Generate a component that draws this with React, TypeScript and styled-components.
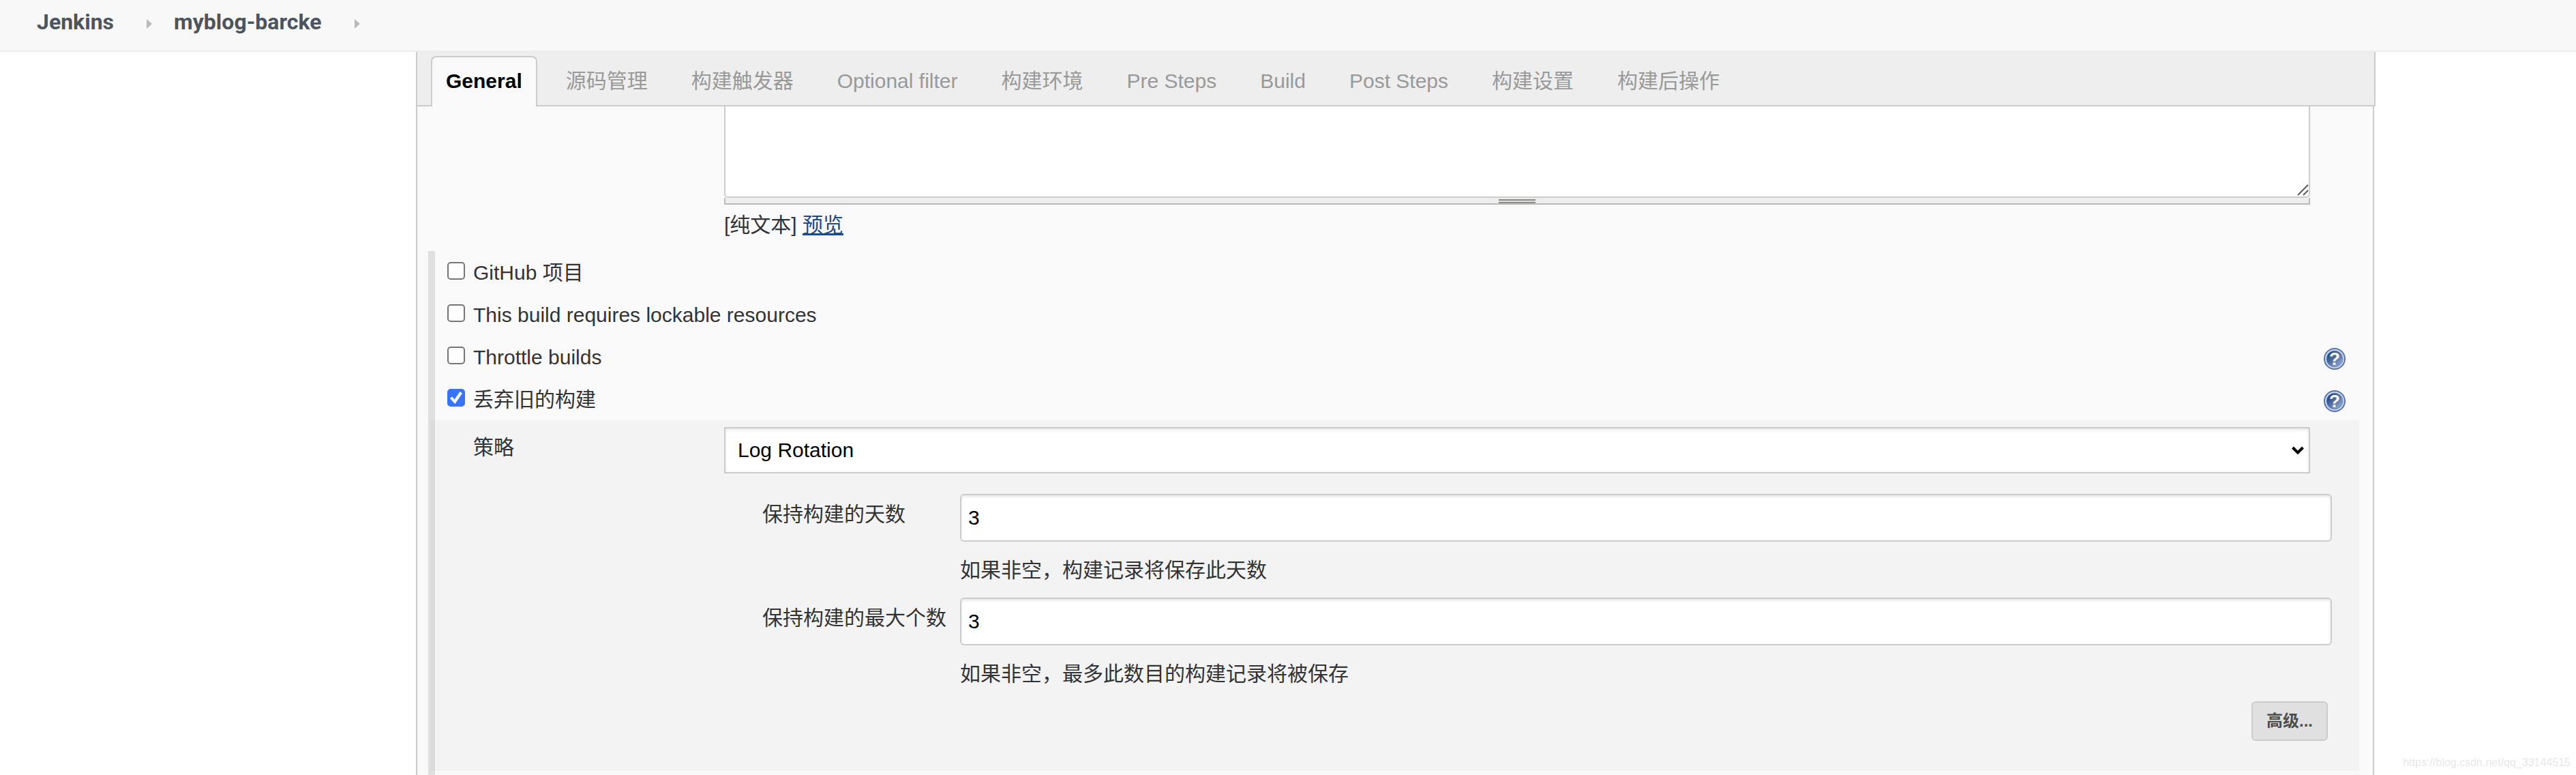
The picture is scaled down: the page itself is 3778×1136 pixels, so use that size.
import React, { useId } from "react";
import styled, { createGlobalStyle } from "styled-components";

const sans = `"Liberation Sans", "Noto Sans CJK SC", sans-serif`;

const GlobalStyle = createGlobalStyle`
  *, *::before, *::after { box-sizing: border-box; }
  body {
    margin: 0;
    background: #fff;
    color: #333;
    font-family: ${sans};
    font-size: 30px;
    line-height: 36px;
  }
`;

const Page = styled.div`
  display: flex;
  flex-direction: column;
  min-height: 100vh;
`;

const Breadcrumbs = styled.nav`
  display: flex;
  align-items: center;
  height: 76px;
  padding: 0 54px 10px;
  background: #f8f8f8;
  border-bottom: 2px solid #ecedf1;
`;

const Crumb = styled.a`
  color: #4d545d;
  font-family: Roboto, sans-serif;
  font-size: 32px;
  font-weight: bold;
  line-height: 36px;
  text-decoration: none;
`;

const CrumbArrow = styled.svg`
  width: 8px;
  height: 14px;
  margin: 6px 32px 0 48px;
  fill: #bababa;
`;

const Main = styled.main`
  flex: 1;
  display: flex;
  flex-direction: column;
  margin: 0 294px 0 610px;
`;

const TabBar = styled.div`
  display: flex;
  align-items: flex-end;
  gap: 20px;
  height: 80px;
  padding: 0 20px;
  background: #eee;
  border: solid #ccc;
  border-width: 0 2px 2px;
`;

const Tab = styled.button<{ $active?: boolean }>`
  height: 74px;
  margin-bottom: -2px;
  padding: 0 20px 2px;
  border: 2px solid ${(p) => (p.$active ? "#ccc" : "transparent")};
  border-bottom: 0;
  border-radius: 8px 8px 0 0;
  background: ${(p) => (p.$active ? "#f9f9f9" : "transparent")};
  color: ${(p) => (p.$active ? "#000" : "#999")};
  font: ${(p) => (p.$active ? "bold" : "normal")} 30px/36px ${sans};
  white-space: nowrap;
`;

const Panel = styled.form`
  flex: 1;
  display: flex;
  flex-direction: column;
  margin-right: 2px;
  background: #f9f9f9;
  border: solid #ccc;
  border-width: 0 2px;
`;

const Description = styled.div`
  padding: 0 92px 20px 450px;
`;

const TextAreaWrap = styled.div`
  position: relative;
  display: flex;
`;

const TextArea = styled.textarea`
  flex: 1;
  height: 134px;
  padding: 8px 10px;
  border: 2px solid #ccc;
  border-top: 0;
  border-radius: 0 0 6px 6px;
  background: #fff;
  font: 30px/36px ${sans};
  resize: none;
  outline: none;
`;

const Grip = styled.svg`
  position: absolute;
  right: 2px;
  bottom: 3px;
  width: 17px;
  height: 17px;
  stroke: #5a5a5a;
  stroke-width: 2;
`;

const ResizeBar = styled.div`
  display: flex;
  justify-content: center;
  height: 10px;
  padding-top: 2px;
  background: #eee;
  border: solid #bbbbb5;
  border-width: 0 2px 2px;
`;

const ResizeHandle = styled.div`
  width: 54px;
  height: 6px;
  background: #ddd;
  border: solid #8c8c88;
  border-width: 2px 0;
`;

const Markup = styled.p`
  margin: 12px 0 0;
`;

const PreviewLink = styled.a`
  color: #204a87;
`;

const Section = styled.section`
  flex: 1;
  margin: 0 20px 0 16px;
  border-left: 10px solid #e0e0e0;
`;

const OptionRow = styled.div`
  display: flex;
  align-items: flex-start;
  height: 62px;
  padding: 14px 20px 0 18px;
`;

const OptionLabel = styled.label`
  flex: 1;
  margin-left: 12px;
`;

const CheckBox = styled.input`
  appearance: none;
  width: 26px;
  height: 26px;
  margin: 2px 0 0;
  background: #fff;
  border: 2px solid #767676;
  border-radius: 5px;

  &:checked {
    background: #3875f6;
    border-color: #3875f6;
  }

  &:checked::before {
    content: "";
    display: block;
    width: 22px;
    height: 22px;
    background: #fff;
    clip-path: polygon(9% 55%, 23% 43%, 39% 61%, 75% 9%, 91% 20%, 42% 91%);
  }
`;

const HelpButton = styled.button`
  display: flex;
  margin-top: 4px;
  padding: 0;
  border: 0;
  background: none;
`;

const HelpSvg = styled.svg`
  width: 32px;
  height: 32px;
`;

const HelpMark = styled.text`
  font: bold 26px ${sans};
  fill: #fff;
  text-anchor: middle;
`;

const Details = styled.div`
  margin-left: -6px;
  padding: 10px 40px 44px 62px;
  background: rgba(0, 0, 0, 0.024);
`;

const StrategyRow = styled.div`
  display: grid;
  grid-template-columns: 368px 1fr;
  padding-right: 32px;
`;

const FieldLabel = styled.label`
  padding-top: 12px;
  white-space: nowrap;
`;

const SelectWrap = styled.div`
  position: relative;
  display: flex;
`;

const Select = styled.select`
  appearance: none;
  flex: 1;
  height: 68px;
  padding: 0 18px;
  border: 2px solid #ccc;
  border-radius: 0;
  background: #fff;
  box-shadow: inset 0 2px 4px rgba(0, 0, 0, 0.1);
  color: #000;
  font: 30px/36px ${sans};
`;

const SelectArrow = styled.svg`
  position: absolute;
  right: 9px;
  top: 28px;
  width: 18px;
  height: 13px;
  fill: none;
  stroke: #000;
  stroke-width: 4;
  pointer-events: none;
`;

const Fields = styled.div`
  padding: 30px 0 0 424px;
`;

const Field = styled.div`
  display: grid;
  grid-template-columns: 290px 1fr;
  padding-bottom: 22px;
`;

const TextInput = styled.input`
  width: 100%;
  height: 70px;
  padding: 0 10px;
  border: 2px solid #ccc;
  border-radius: 6px;
  background: #fff;
  box-shadow: inset 0 2px 4px rgba(0, 0, 0, 0.1);
  color: #000;
  font: 30px/36px ${sans};
`;

const Hint = styled.p`
  grid-column: 2;
  margin: 24px 0 0;
`;

const Actions = styled.div`
  display: flex;
  justify-content: flex-end;
  padding-right: 6px;
`;

const AdvancedButton = styled.button`
  height: 58px;
  padding: 0 20px;
  border: 2px solid #ccc;
  border-radius: 6px;
  background: #e0e0e0;
  color: #4d4d4d;
  font: bold 24px/28px ${sans};
`;

const Watermark = styled.div`
  position: fixed;
  right: 8px;
  bottom: 8px;
  color: #e6e6e6;
  font-size: 16px;
  line-height: 20px;
`;

function CrumbSeparator() {
  return (
    <CrumbArrow viewBox="0 0 8 14" aria-hidden="true">
      <path d="M0 0 8 7 0 14Z" />
    </CrumbArrow>
  );
}

function HelpIcon() {
  const id = useId();
  return (
    <HelpSvg viewBox="0 0 32 32" aria-hidden="true">
      <defs>
        <linearGradient id={id} x1="0" y1="0" x2="1" y2="1">
          <stop offset="0.2" stopColor="#2c4a86" />
          <stop offset="0.9" stopColor="#8fa9d0" />
        </linearGradient>
      </defs>
      <circle cx="16" cy="16" r="15" fill="#d3dcec" stroke="#5674ab" strokeWidth="2" />
      <circle cx="16" cy="16" r="12" fill={`url(#${id})`} stroke="#7b94c0" strokeWidth="1" />
      <HelpMark x="16" y="25">?</HelpMark>
    </HelpSvg>
  );
}

function Option({ label, checked, help }: { label: string; checked?: boolean; help?: boolean }) {
  const id = useId();
  return (
    <OptionRow>
      <CheckBox type="checkbox" id={id} defaultChecked={checked} />
      <OptionLabel htmlFor={id}>{label}</OptionLabel>
      {help && (
        <HelpButton type="button" aria-label={label}>
          <HelpIcon />
        </HelpButton>
      )}
    </OptionRow>
  );
}

function NumberField({ label, hint, value }: { label: string; hint: string; value: string }) {
  const id = useId();
  return (
    <Field>
      <FieldLabel htmlFor={id}>{label}</FieldLabel>
      <TextInput id={id} type="text" defaultValue={value} />
      <Hint>{hint}</Hint>
    </Field>
  );
}

const tabs = [
  "General",
  "源码管理",
  "构建触发器",
  "Optional filter",
  "构建环境",
  "Pre Steps",
  "Build",
  "Post Steps",
  "构建设置",
  "构建后操作",
];

export default function App() {
  return (
    <Page lang="zh-CN">
      <GlobalStyle />
      <Breadcrumbs>
        <Crumb href="#">Jenkins</Crumb>
        <CrumbSeparator />
        <Crumb href="#">myblog-barcke</Crumb>
        <CrumbSeparator />
      </Breadcrumbs>
      <Main>
        <TabBar role="tablist">
          {tabs.map((tab, i) => (
            <Tab key={tab} type="button" role="tab" aria-selected={i === 0} $active={i === 0}>
              {tab}
            </Tab>
          ))}
        </TabBar>
        <Panel>
          <Description>
            <TextAreaWrap>
              <TextArea aria-label="描述" />
              <Grip viewBox="0 0 17 17" aria-hidden="true">
                <path d="M1 16 16 1M9 16l7-7" />
              </Grip>
            </TextAreaWrap>
            <ResizeBar>
              <ResizeHandle />
            </ResizeBar>
            <Markup>
              [纯文本] <PreviewLink href="#">预览</PreviewLink>
            </Markup>
          </Description>
          <Section>
            <Option label="GitHub 项目" />
            <Option label="This build requires lockable resources" />
            <Option label="Throttle builds" help />
            <Option label="丢弃旧的构建" checked help />
            <Details>
              <StrategyRow>
                <FieldLabel htmlFor="strategy">策略</FieldLabel>
                <SelectWrap>
                  <Select id="strategy">
                    <option>Log Rotation</option>
                  </Select>
                  <SelectArrow viewBox="0 0 18 13" aria-hidden="true">
                    <path d="m1.500 2 7.500 7.500L16.500 2" />
                  </SelectArrow>
                </SelectWrap>
              </StrategyRow>
              <Fields>
                <NumberField label="保持构建的天数" hint="如果非空，构建记录将保存此天数" value="3" />
                <NumberField label="保持构建的最大个数" hint="如果非空，最多此数目的构建记录将被保存" value="3" />
              </Fields>
              <Actions>
                <AdvancedButton type="button">高级...</AdvancedButton>
              </Actions>
            </Details>
          </Section>
        </Panel>
      </Main>
      <Watermark>https://blog.csdn.net/qq_33144515</Watermark>
    </Page>
  );
}
